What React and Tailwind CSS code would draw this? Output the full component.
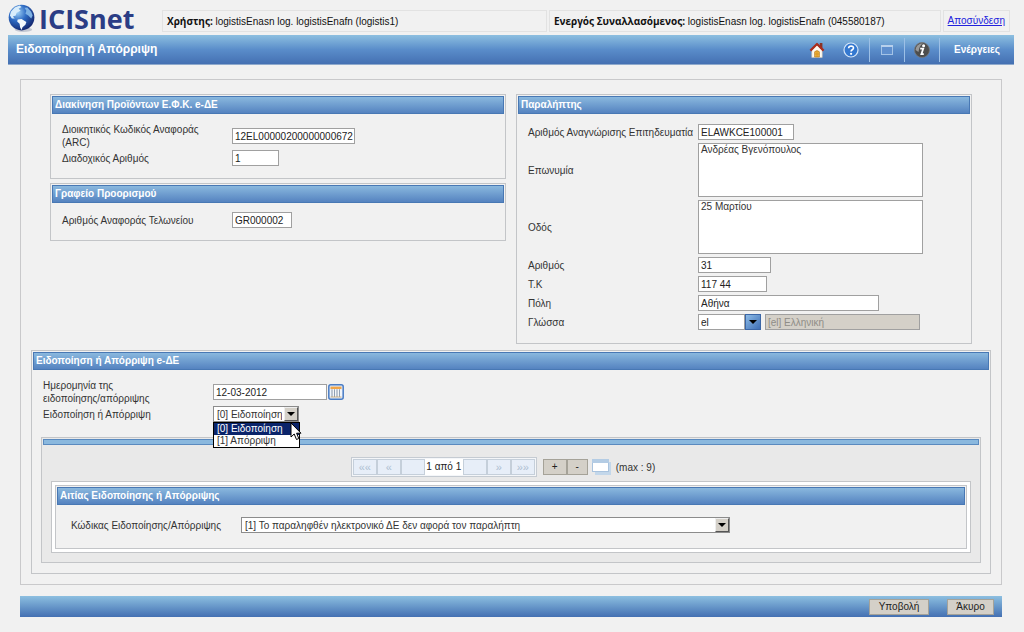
import { useState } from 'react'
import clsx from 'clsx'

function GlobeLogo() {
  return (
    <svg viewBox="0 0 30 30" className="size-[29px] shrink-0" aria-hidden="true">
      <defs>
        <radialGradient id="globe" cx="0.35" cy="0.3" r="0.75">
          <stop offset="0" stopColor="#9fd0f5" />
          <stop offset="0.45" stopColor="#2f6cc4" />
          <stop offset="1" stopColor="#12246b" />
        </radialGradient>
      </defs>
      <ellipse cx="16" cy="26.5" rx="9" ry="2.5" fill="#c4c8d2" />
      <circle cx="14" cy="14" r="13.3" fill="url(#globe)" />
      <path
        d="M3 8 L7 3.5 L12 1.5 L14 3 L11 5 L13 7 L9 9 L8 12 L5 13 L7 15 L4 15 L2 12 Z"
        fill="#d9edfb"
      />
      <path
        d="M10 16 L14 15.5 L19 18.5 L18 21.5 L15 24 L14 27 L12.5 24 L12 20.5 L9.5 18 Z"
        fill="#f4f9fd"
      />
      <path
        d="M17 4 L20 3.5 L24 8 L25.5 12 L24 15 L21 12 L18 10 L19 7 Z"
        fill="#7fb2e4"
      />
    </svg>
  )
}

function HomeIcon() {
  return (
    <svg viewBox="0 0 16 16" className="size-4" aria-hidden="true">
      <rect x="10.8" y="1" width="2.6" height="5" fill="#8a3325" />
      <path d="M2.8 8 L8 3 L13.2 8 V15.4 H2.8 Z" fill="#fffaf0" stroke="#cfc4b4" strokeWidth="0.6" />
      <path
        d="M1.4 8.6 L8 2 L14.6 8.6"
        fill="none"
        stroke="#a92c1c"
        strokeWidth="2.2"
        strokeLinejoin="round"
      />
      <path d="M5.6 15 V9.8 Q8 7.4 10.4 9.8 V15 Z" fill="#f0b23a" stroke="#a8701c" strokeWidth="0.6" />
      <path d="M8 9 V15 M5.6 12 H10.4" stroke="#c98a22" strokeWidth="0.6" />
    </svg>
  )
}

function HelpIcon() {
  return (
    <svg viewBox="0 0 16 16" className="size-4" aria-hidden="true">
      <circle cx="8" cy="8" r="7" fill="#3478d0" stroke="#d5e6f8" strokeWidth="1.2" />
      <path
        d="M5.6 6.3 Q5.7 4 8.1 4 Q10.5 4.1 10.5 6 Q10.5 7 9.3 7.7 Q8.1 8.4 8.1 9.6"
        fill="none"
        stroke="#fff"
        strokeWidth="1.6"
      />
      <circle cx="8.1" cy="11.8" r="1.1" fill="#fff" />
    </svg>
  )
}

function WindowIcon() {
  return (
    <svg viewBox="0 0 12 12" className="size-3" aria-hidden="true">
      <rect x="0.5" y="1.5" width="11" height="9" fill="#5f8fce" stroke="#a4c3e6" />
      <rect x="0" y="1" width="12" height="2" fill="#b7d0ec" />
    </svg>
  )
}

function InfoIcon() {
  return (
    <svg viewBox="0 0 16 16" className="size-4" aria-hidden="true">
      <circle cx="8" cy="8" r="7.5" fill="#4d4d4d" stroke="#777" strokeWidth="0.8" />
      <path d="M1.5 8 Q2 1.6 9 1.2 Q5 4 4.5 10 Z" fill="#999" />
      <circle cx="9.6" cy="3.8" r="1.5" fill="#fff" />
      <path d="M6.2 6.7 H9.2 L7.4 12.2 H9.8" fill="none" stroke="#fff" strokeWidth="1.8" />
    </svg>
  )
}

function CalendarIcon() {
  return (
    <svg viewBox="0 0 16 16" className="size-4" aria-hidden="true">
      <rect x="0.8" y="0.8" width="14.4" height="14.4" rx="2" fill="#dfeafa" stroke="#4a7cc4" strokeWidth="1.5" />
      <rect x="2.5" y="2.6" width="11" height="2.6" fill="#f0a548" />
      <rect x="2.5" y="5.2" width="11" height="8" fill="#fff" />
      <path d="M4 5.2 V13 M6.5 5.2 V13 M9 5.2 V13 M11.5 5.2 V13" stroke="#8f9fb4" strokeWidth="1.2" />
      <path d="M2.5 13 H13.5" stroke="#c9a36a" strokeWidth="0.8" />
    </svg>
  )
}

function DetachIcon() {
  return (
    <svg viewBox="0 0 20 18" className="h-[18px] w-5" aria-hidden="true">
      <rect x="3" y="4" width="16" height="13" fill="#c3d7ea" />
      <rect x="0.5" y="1.5" width="16" height="12" fill="#fff" stroke="#a9c3de" />
      <rect x="0" y="1" width="17" height="4" fill="#b4cce4" />
    </svg>
  )
}

function Cursor() {
  return (
    <svg
      viewBox="0 0 12 19"
      className="pointer-events-none absolute top-4 left-[77px] z-20 h-[19px] w-3"
      aria-hidden="true"
    >
      <path
        d="M1 1 V15 L4.2 12 L6.5 17.5 L8.8 16.5 L6.6 11.2 H11 Z"
        fill="#fff"
        stroke="#000"
      />
    </svg>
  )
}

function Arrow() {
  return (
    <svg viewBox="0 0 8 4" className="h-1 w-2" aria-hidden="true">
      <path d="M0 0 H8 L4 4 Z" fill="#000" />
    </svg>
  )
}

function Panel({ title, className, children }) {
  return (
    <section className={clsx('border border-[#c3c5c8] bg-[#f1f1f1] p-px', className)}>
      <h2 className="h-[18px] border border-[#4878b4] bg-linear-to-b from-[#8ab8de] to-[#5583c0] px-0.5 text-[10px] leading-4 font-bold text-white">
        {title}
      </h2>
      {children}
    </section>
  )
}

function Field({ id, label, children }) {
  return (
    <div className="flex items-center">
      <label htmlFor={id} className="w-[170px] shrink-0">
        {label}
      </label>
      {children}
    </div>
  )
}

function TextBox({ id, className, ...props }) {
  return (
    <input
      id={id}
      type="text"
      className={clsx('h-4 border border-[#a0a0a0] bg-white pl-0.5 text-[#222]', className)}
      {...props}
    />
  )
}

function TextArea({ id, ...props }) {
  return (
    <textarea
      id={id}
      className="block h-[54px] w-[225px] resize-none border border-[#a0a0a0] bg-white px-0.5 leading-3"
      {...props}
    />
  )
}

function SelectBox({ id, className, options, ...props }) {
  return (
    <div className={clsx('relative h-4', className)}>
      <select
        id={id}
        className="block h-4 w-full appearance-none border border-[#8c8c8c] bg-white pr-4 pl-[3px] outline-none"
        {...props}
      >
        {options.map((option) => (
          <option key={option}>{option}</option>
        ))}
      </select>
      <span className="pointer-events-none absolute inset-y-px right-px flex w-3.5 items-center justify-center border border-t-[#eee] border-r-[#555] border-b-[#555] border-l-[#eee] bg-[#d4d0c8]">
        <Arrow />
      </span>
    </div>
  )
}

function PagerButton({ label, children }) {
  return (
    <button
      aria-label={label}
      className="h-4 w-6 border border-[#c5cfda] bg-[#e7eef8] text-[11px] leading-3 text-[#aebfd2]"
    >
      {children}
    </button>
  )
}

function GreyButton({ className, children }) {
  return (
    <button className={clsx('h-4 border border-[#a5a298] bg-[#d4d0c8] leading-3 text-[#222]', className)}>
      {children}
    </button>
  )
}

const decisions = ['[0] Ειδοποίηση', '[1] Απόρριψη']

function App() {
  const [decision, setDecision] = useState(decisions[0])

  return (
    <div className="min-h-screen bg-[#f1f1f1] pr-2.5 pb-4 pl-2 font-[Liberation_Sans,Arial,sans-serif] text-[10px] leading-[13px] text-[#333]">
      <header>
        <div className="flex h-[35px] items-center pt-1.5 pr-1">
          <div className="flex w-[154px] shrink-0 items-center gap-0.5 pb-1">
            <GlobeLogo />
            <span className="font-[Open_Sans,sans-serif] text-[27px] leading-7 font-bold text-[#2b3d85]">
              ICISnet
            </span>
          </div>
          <div className="flex grow gap-0.5 text-[#111]">
            <div className="h-[22px] flex-[385] border border-[#e2e2e2] px-1 leading-5">
              <b className="font-[Open_Sans,sans-serif]">Χρήστης:</b> logistisEnasn log. logistisEnafn (logistis1)
            </div>
            <div className="h-[22px] flex-[392] border border-[#e2e2e2] px-1 leading-5">
              <b className="font-[Open_Sans,sans-serif]">Ενεργός Συναλλασόμενος:</b> logistisEnasn log. logistisEnafn
              (045580187)
            </div>
            <div className="h-[22px] border border-[#e2e2e2] px-1 leading-5">
              <a href="#logout" className="text-[#2222dd] underline">
                Αποσύνδεση
              </a>
            </div>
          </div>
        </div>
        <div className="flex h-[30px] items-center justify-between border-b border-[#8ea9cc] bg-linear-to-b from-[#8dbfe0] via-[#5a8dca] to-[#4470b2] pr-3.5 pl-2 font-bold text-white">
          <h1 className="text-[12px]">Ειδοποίηση ή Απόρριψη</h1>
          <nav className="flex h-full items-center text-[10px]">
            <button aria-label="Αρχική" className="px-2">
              <HomeIcon />
            </button>
            <button aria-label="Βοήθεια" className="px-2.5">
              <HelpIcon />
            </button>
            <button aria-label="Παράθυρο" className="h-6 border-l border-[#9dc0e6] px-[11px]">
              <WindowIcon />
            </button>
            <button aria-label="Πληροφορίες" className="h-6 border-x border-[#9dc0e6] px-[9px]">
              <InfoIcon />
            </button>
            <button className="pl-3.5">Ενέργειες</button>
          </nav>
        </div>
      </header>

      <main className="mt-3.5 mr-3 ml-3 border border-[#c9c9cb] px-2.5 pt-3.5 pb-2.5">
        <div className="grid grid-cols-2 gap-2.5 px-[19px]">
          <div className="flex flex-col gap-1">
            <Panel title="Διακίνηση Προϊόντων Ε.Φ.Κ. e-ΔΕ">
              <div className="flex flex-col gap-px px-2.5 pt-[9px] pb-[11px]">
                <Field
                  id="arc"
                  label={
                    <>
                      Διοικητικός Κωδικός Αναφοράς
                      <br />
                      (ARC)
                    </>
                  }
                >
                  <TextBox id="arc" className="w-[123px]" defaultValue="12EL00000200000000672" />
                </Field>
                <Field id="seq" label="Διαδοχικός Αριθμός">
                  <TextBox id="seq" className="w-[47px]" defaultValue="1" />
                </Field>
              </div>
            </Panel>
            <Panel title="Γραφείο Προορισμού">
              <div className="px-2.5 pt-[9px] pb-[11px]">
                <Field id="office" label="Αριθμός Αναφοράς Τελωνείου">
                  <TextBox id="office" className="w-[60px]" defaultValue="GR000002" />
                </Field>
              </div>
            </Panel>
          </div>
          <Panel title="Παραλήπτης">
            <div className="flex flex-col gap-[3px] px-2.5 pt-2.5 pb-3">
              <Field id="trader" label="Αριθμός Αναγνώρισης Επιτηδευματία">
                <TextBox id="trader" className="w-24" defaultValue="ELAWKCE100001" />
              </Field>
              <Field id="name" label="Επωνυμία">
                <TextArea id="name" defaultValue="Ανδρέας Βγενόπουλος" />
              </Field>
              <Field id="street" label="Οδός">
                <TextArea id="street" defaultValue="25 Μαρτίου" />
              </Field>
              <Field id="number" label="Αριθμός">
                <TextBox id="number" className="w-[73px]" defaultValue="31" />
              </Field>
              <Field id="zip" label="Τ.Κ">
                <TextBox id="zip" className="w-[69px]" defaultValue="117 44" />
              </Field>
              <Field id="city" label="Πόλη">
                <TextBox id="city" className="w-[181px]" defaultValue="Αθήνα" />
              </Field>
              <Field id="lang" label="Γλώσσα">
                <TextBox id="lang" className="w-[47px]" defaultValue="el" />
                <button
                  aria-label="Επιλογή γλώσσας"
                  className="flex h-4 w-4 items-center justify-center border border-[#3b66a6] bg-linear-to-br from-[#8dbbe6] to-[#3f6fb5]"
                >
                  <Arrow />
                </button>
                <TextBox
                  aria-label="Περιγραφή γλώσσας"
                  className="ml-1 w-[155px] bg-[#d4d0c8]! text-[#8f8d87]!"
                  defaultValue="[el] Ελληνική"
                  disabled
                />
              </Field>
            </div>
          </Panel>
        </div>

        <Panel title="Ειδοποίηση ή Απόρριψη e-ΔΕ" className="mt-1.5 pb-2.5">
          <div className="flex flex-col gap-px px-2.5 pt-[9px]">
            <Field
              id="date"
              label={
                <>
                  Ημερομηνία της
                  <br />
                  ειδοποίησης/απόρριψης
                </>
              }
            >
              <TextBox id="date" className="w-[114px]" defaultValue="12-03-2012" />
              <button aria-label="Ημερολόγιο" className="ml-px">
                <CalendarIcon />
              </button>
            </Field>
            <Field id="decision" label="Ειδοποίηση ή Απόρριψη">
              <div className="relative">
                <SelectBox
                  id="decision"
                  className="w-[86px]"
                  options={decisions}
                  value={decision}
                  onChange={(e) => setDecision(e.target.value)}
                />
                <ul className="absolute top-4 left-0 z-10 w-[87px] border border-black bg-white">
                  {decisions.map((item) => (
                    <li
                      key={item}
                      onClick={() => setDecision(item)}
                      className={clsx('pl-[3px] leading-3', item === decision && 'bg-[#0a246a] text-white')}
                    >
                      {item}
                    </li>
                  ))}
                </ul>
                <Cursor />
              </div>
            </Field>
          </div>

          <section className="mx-2 mt-[15px] border border-[#c3c5c8] bg-[#e9e9e9] p-px">
            <div className="h-1.5 border border-[#5a8abf] bg-[#8ab8de]" />
            <div className="mt-3 flex items-center justify-center pr-4">
              <div className="flex items-center border border-[#c5cbd2] bg-[#f4f6f9] p-px">
                <PagerButton label="Πρώτη">««</PagerButton>
                <PagerButton label="Προηγούμενη">«</PagerButton>
                <PagerButton label="Πίσω" />
                <span className="w-[38px] bg-white text-center leading-4 text-[#222]">1 από 1</span>
                <PagerButton label="Εμπρός" />
                <PagerButton label="Επόμενη">»</PagerButton>
                <PagerButton label="Τελευταία">»»</PagerButton>
              </div>
              <GreyButton className="ml-1.5 w-6">+</GreyButton>
              <GreyButton className="w-[21px]">-</GreyButton>
              <button aria-label="Αποκόλληση" className="ml-1">
                <DetachIcon />
              </button>
              <span className="ml-1">(max : 9)</span>
            </div>
            <div className="m-2 mt-1 border border-[#c3c5c8] bg-white p-[3px]">
              <Panel title="Αιτίας Ειδοποίησης ή Απόρριψης">
                <div className="px-3.5 pt-3 pb-3.5">
                  <Field id="reason" label="Κώδικας Ειδοποίησης/Απόρριψης">
                    <SelectBox
                      id="reason"
                      className="w-[489px]"
                      options={['[1] Το παραληφθέν ηλεκτρονικό ΔΕ δεν αφορά τον παραλήπτη']}
                    />
                  </Field>
                </div>
              </Panel>
            </div>
          </section>
        </Panel>
      </main>

      <footer className="mx-3 mt-[11px] flex h-[21px] items-center justify-end gap-[18px] bg-linear-to-b from-[#8dbfe0] to-[#4470b2] pr-2">
        <GreyButton className="w-[60px]">Υποβολή</GreyButton>
        <GreyButton className="w-[47px]">Άκυρο</GreyButton>
      </footer>
    </div>
  )
}

export default App
